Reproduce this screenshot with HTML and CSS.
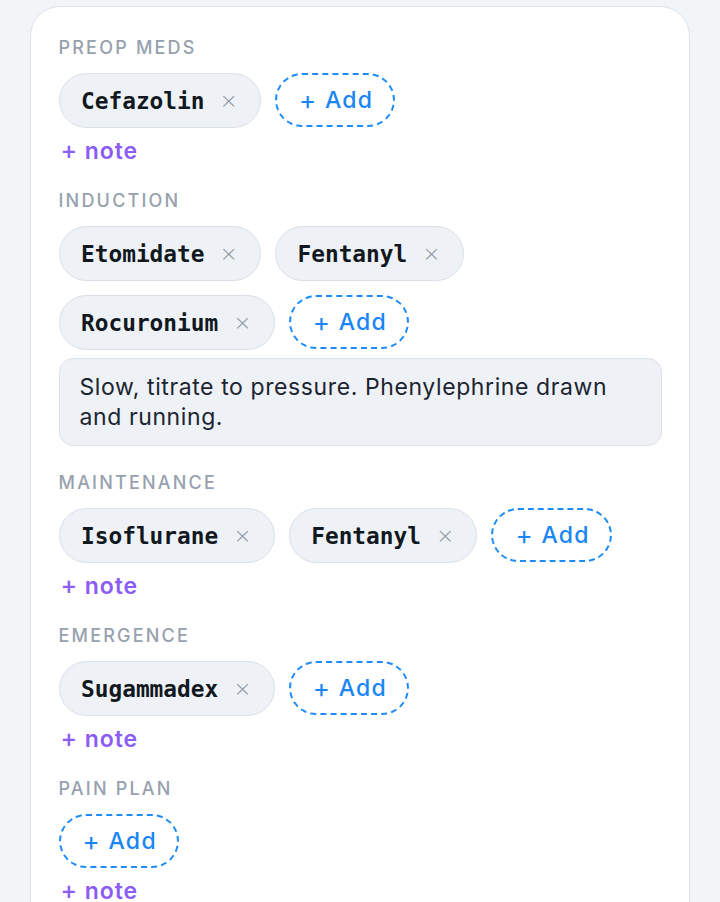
FILE: index.html
```html
<!DOCTYPE html>
<html>
<head>
<meta charset="utf-8">
<link rel="stylesheet" href="styles.css">
</head>
<body>
<div class="card">
  <section class="sec">
    <div class="label">PREOP MEDS</div>
    <div class="chips">
      <span class="chip"><span class="name">Cefazolin</span><span class="x">×</span></span>
      <span class="add"><span class="aplus">+</span> Add</span>
    </div>
    <div class="note-link"><span class="plus">+</span> note</div>
  </section>
  <section class="sec">
    <div class="label">INDUCTION</div>
    <div class="chips">
      <span class="chip"><span class="name">Etomidate</span><span class="x">×</span></span>
      <span class="chip"><span class="name">Fentanyl</span><span class="x">×</span></span>
      <span class="chip"><span class="name">Rocuronium</span><span class="x">×</span></span>
      <span class="add"><span class="aplus">+</span> Add</span>
    </div>
    <div class="note-box">Slow, titrate to pressure. Phenylephrine drawn and running.</div>
  </section>
  <section class="sec">
    <div class="label">MAINTENANCE</div>
    <div class="chips">
      <span class="chip"><span class="name">Isoflurane</span><span class="x">×</span></span>
      <span class="chip"><span class="name">Fentanyl</span><span class="x">×</span></span>
      <span class="add"><span class="aplus">+</span> Add</span>
    </div>
    <div class="note-link"><span class="plus">+</span> note</div>
  </section>
  <section class="sec">
    <div class="label">EMERGENCE</div>
    <div class="chips">
      <span class="chip"><span class="name">Sugammadex</span><span class="x">×</span></span>
      <span class="add"><span class="aplus">+</span> Add</span>
    </div>
    <div class="note-link"><span class="plus">+</span> note</div>
  </section>
  <section class="sec">
    <div class="label">PAIN PLAN</div>
    <div class="chips">
      <span class="add"><span class="aplus">+</span> Add</span>
    </div>
    <div class="note-link"><span class="plus">+</span> note</div>
  </section>
</div>
</body>
</html>
```
FILE: styles.css
```css
* { box-sizing: border-box; }
html, body { margin: 0; padding: 0; }
body {
  background: #f2f5f8;
  padding: 6px 30px 0;
  font-family: Inter, "Liberation Sans", sans-serif;
  height: 902px;
  overflow: hidden;
}
.card {
  background: #fff;
  border: 1.5px solid #dce3eb;
  border-radius: 30px;
  padding: 31px 27.5px 40px;
  display: flex;
  flex-direction: column;
  gap: 27px;
}
.sec { display: flex; flex-direction: column; }
.label {
  font-size: 18px;
  line-height: 20px;
  letter-spacing: 2.2px;
  color: #97a1ae;
  font-weight: 500;
  margin-bottom: 15px;
}
.chips {
  display: flex;
  flex-wrap: wrap;
  gap: 14px;
}
.chip {
  height: 55px;
  display: inline-flex;
  align-items: center;
  gap: 15px;
  padding: 0 22px 0 21.5px;
  background: #eef2f7;
  border: 1.5px solid #d9e0e8;
  border-radius: 28px;
}
.name {
  font-family: "DejaVu Sans Mono", "Liberation Mono", monospace;
  font-weight: bold;
  font-size: 22.8px;
  color: #111820;
}
.x {
  font-family: "DejaVu Sans", sans-serif;
  font-size: 22px;
  color: #8e97a2;
  font-weight: 300;
}
.add {
  height: 54px;
  display: inline-flex;
  align-items: center;
  padding: 0 20px 0 22px;
  border: 2.5px dashed #1d8cf8;
  border-radius: 28px;
  color: #1a86f5;
  font-size: 23px;
  letter-spacing: 1.3px;
  font-weight: 500;
  white-space: pre;
}
.aplus { font-size: 26px; font-weight: 400; line-height: 1; }
.note-link {
  margin-top: 8px;
  height: 28px;
  line-height: 28px;
  font-size: 23px;
  letter-spacing: 0.9px;
  font-weight: 600;
  color: #8b5cf6;
  padding-left: 2px;
}
.plus { font-weight: 500; font-size: 25px; }
.note-box {
  margin-top: 8px;
  background: #eef2f7;
  border: 1.5px solid #dbe2ea;
  border-radius: 14px;
  padding: 13px 20px 13px 20px;
  font-size: 23px;
  line-height: 30px;
  letter-spacing: 0.6px;
  color: #1c2430;
}
```
